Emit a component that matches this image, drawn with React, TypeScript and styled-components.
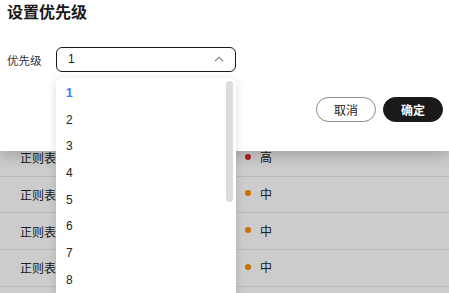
import styled, { createGlobalStyle } from 'styled-components';

const GlobalStyle = createGlobalStyle`
  html, body {
    margin: 0;
    padding: 0;
    overflow: hidden;
    background: #ffffff;
  }
  body {
    font-family: "Noto Sans CJK SC", "Noto Sans", sans-serif;
  }
`;

type Level = 'high' | 'mid';

const rules: { name: string; level: Level }[] = [
  { name: '正则表达式匹配规则', level: 'high' },
  { name: '正则表达式匹配规则', level: 'mid' },
  { name: '正则表达式匹配规则', level: 'mid' },
  { name: '正则表达式匹配规则', level: 'mid' },
];

const levelText: Record<Level, string> = { high: '高', mid: '中' };

const options = ['1', '2', '3', '4', '5', '6', '7', '8'];

const ChevronUp = () => (
  <svg width="10" height="6" viewBox="0 0 10 6" fill="none">
    <path d="M1 5.2 5 1.2 9 5.2" stroke="#777" strokeWidth="1.1" />
  </svg>
);

const App: React.FC = () => {
  const selected = '1';

  return (
    <>
      <GlobalStyle />
      <Page>
        <Table>
          {rules.map((r, idx) => (
            <Row key={idx}>
              <NameCell>
                <NameText>{r.name}</NameText>
              </NameCell>
              <LevelCell>
                <Dot $level={r.level} />
                {levelText[r.level]}
              </LevelCell>
            </Row>
          ))}
        </Table>
        <Mask />

        <Dialog>
          <Title>设置优先级</Title>
          <FormRow>
            <Label>优先级</Label>
            <SelectBox>
              <span>{selected}</span>
              <ChevronUp />
            </SelectBox>
          </FormRow>
          <Footer>
            <Button>取消</Button>
            <Button $primary>确定</Button>
          </Footer>
        </Dialog>

        <Dropdown>
          {options.map(opt => (
            <Option key={opt} $active={opt === selected}>
              {opt}
            </Option>
          ))}
          <ScrollThumb />
        </Dropdown>
      </Page>
    </>
  );
};

const Page = styled.div`
  position: relative;
  width: 449px;
  height: 293px;
  overflow: hidden;
  background: #ffffff;
`;

const Table = styled.div`
  display: flex;
  flex-direction: column;
  padding-top: 140px;
`;

const Row = styled.div`
  display: grid;
  grid-template-columns: 245px 1fr;
  align-items: center;
  height: 36.67px;
  box-sizing: border-box;
  border-bottom: 1px solid #e8e8e8;
  font-size: 12px;
  color: #252525;
`;

const NameCell = styled.div`
  padding-left: 20px;
`;

/* the rest of the name sits under the open dropdown */
const NameText = styled.div`
  width: 36px;
  white-space: nowrap;
  overflow: hidden;
`;

const LevelCell = styled.div`
  display: flex;
  align-items: center;
  gap: 9px;
  padding-bottom: 2px;
`;

const Dot = styled.span<{ $level: Level }>`
  width: 6px;
  height: 6px;
  border-radius: 50%;
  background: ${p => (p.$level === 'high' ? '#e02a2a' : '#fa8c00')};
`;

const Mask = styled.div`
  position: absolute;
  inset: 0;
  background: rgba(0, 0, 0, 0.2);
`;

const Dialog = styled.div`
  position: absolute;
  top: 0;
  left: 0;
  right: 0;
  height: 151px;
  background: #ffffff;
  box-shadow: 0 4px 14px rgba(0, 0, 0, 0.22);
  display: flex;
  flex-direction: column;
`;

const Title = styled.h2`
  margin: 0;
  padding: 0 0 0 7px;
  font-size: 16px;
  line-height: 22px;
  font-weight: 700;
  color: #191919;
`;

const FormRow = styled.div`
  display: flex;
  align-items: center;
  margin-top: 25px;
  padding-left: 7px;
`;

const Label = styled.label`
  width: 49px;
  font-size: 11.5px;
  color: #333;
`;

const SelectBox = styled.div`
  box-sizing: border-box;
  width: 180px;
  height: 25px;
  display: flex;
  align-items: center;
  justify-content: space-between;
  padding: 0 11px 1px 11px;
  border: 1px solid #191919;
  border-radius: 6px;
  font-family: "Liberation Sans", Arial, sans-serif;
  font-size: 12px;
  color: #191919;
`;

const Footer = styled.div`
  display: flex;
  justify-content: flex-end;
  gap: 7px;
  margin-top: 25px;
  padding-right: 6px;
`;

const Button = styled.button<{ $primary?: boolean }>`
  box-sizing: border-box;
  width: 60px;
  height: 25px;
  border-radius: 13px;
  border: 1px solid ${p => (p.$primary ? '#191919' : '#8a8a8a')};
  background: ${p => (p.$primary ? '#191919' : '#ffffff')};
  color: ${p => (p.$primary ? '#ffffff' : '#191919')};
  font-family: "Noto Sans CJK SC", sans-serif;
  font-size: 12px;
  font-weight: ${p => (p.$primary ? 700 : 400)};
  padding: 0;
`;

const Dropdown = styled.div`
  position: absolute;
  left: 56px;
  top: 78px;
  bottom: -8px;
  width: 180px;
  box-sizing: border-box;
  padding-top: 2px;
  background: #ffffff;
  border-radius: 6px;
  box-shadow: 0 2px 10px rgba(0, 0, 0, 0.14);
  display: flex;
  flex-direction: column;
`;

const Option = styled.div<{ $active?: boolean }>`
  height: 26.67px;
  line-height: 26.67px;
  padding-left: 10px;
  font-family: "Liberation Sans", Arial, sans-serif;
  font-size: 12px;
  color: ${p => (p.$active ? '#2f7ff6' : '#252525')};
  font-weight: ${p => (p.$active ? 700 : 400)};
`;

const ScrollThumb = styled.div`
  position: absolute;
  top: 3px;
  right: 3px;
  width: 7px;
  height: 121px;
  border-radius: 4px;
  background: #dcdcdc;
`;

export default App;
